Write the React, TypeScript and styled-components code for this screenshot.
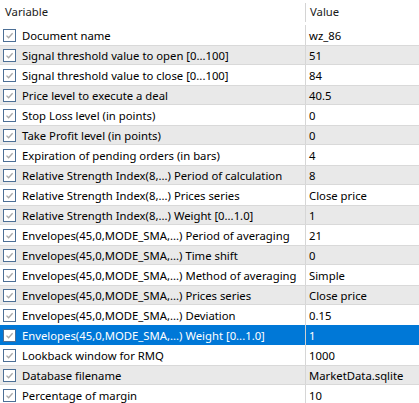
import React from "react";
import styled, { createGlobalStyle, css } from "styled-components";

const GlobalStyle = createGlobalStyle`
  html, body {
    margin: 0;
    padding: 0;
    background: #ffffff;
  }
  body {
    font-family: "Noto Sans", "Open Sans", Arial, sans-serif;
    font-size: 11.3px;
    color: #000000;
    overflow: hidden;
  }
`;

type Param = { name: string; value: string };

const params: Param[] = [
  { name: "Document name", value: "wz_86" },
  { name: "Signal threshold value to open [0...100]", value: "51" },
  { name: "Signal threshold value to close [0...100]", value: "84" },
  { name: "Price level to execute a deal", value: "40.5" },
  { name: "Stop Loss level (in points)", value: "0" },
  { name: "Take Profit level (in points)", value: "0" },
  { name: "Expiration of pending orders (in bars)", value: "4" },
  { name: "Relative Strength Index(8,...) Period of calculation", value: "8" },
  { name: "Relative Strength Index(8,...) Prices series", value: "Close price" },
  { name: "Relative Strength Index(8,...) Weight [0...1.0]", value: "1" },
  { name: "Envelopes(45,0,MODE_SMA,...) Period of averaging", value: "21" },
  { name: "Envelopes(45,0,MODE_SMA,...) Time shift", value: "0" },
  { name: "Envelopes(45,0,MODE_SMA,...) Method of averaging", value: "Simple" },
  { name: "Envelopes(45,0,MODE_SMA,...) Prices series", value: "Close price" },
  { name: "Envelopes(45,0,MODE_SMA,...) Deviation", value: "0.15" },
  { name: "Envelopes(45,0,MODE_SMA,...) Weight [0...1.0]", value: "1" },
  { name: "Lookback window for RMQ", value: "1000" },
  { name: "Database filename", value: "MarketData.sqlite" },
  { name: "Percentage of margin", value: "10" },
];

const SELECTED = 15;

const Table = styled.div`
  width: 419px;
  display: flex;
  flex-direction: column;
`;

const Header = styled.div`
  display: grid;
  grid-template-columns: 305px 1fr;
  height: 25px;
  align-items: stretch;
`;

const HeadCell = styled.div<{ $divider?: boolean }>`
  display: flex;
  align-items: center;
  padding-left: 5px;
  padding-bottom: 2px;
  color: #1a1a1a;
  ${(p) =>
    p.$divider &&
    css`
      position: relative;
      &:before {
        content: "";
        position: absolute;
        left: 0;
        top: 3px;
        height: 19px;
        width: 1px;
        background: #d4d4d4;
      }
    `}
`;

type Tone = "plain" | "shade" | "selected";

const Row = styled.div<{ $tone: Tone }>`
  display: grid;
  grid-template-columns: 305px 1fr;
  height: 20px;
  box-sizing: border-box;
  background: #ffffff;
  ${(p) =>
    p.$tone === "shade" &&
    css`
      background: #e9e9e9;
      border-top: 1px solid #d9d9d9;
      border-bottom: 1px solid #d9d9d9;
    `}
  ${(p) =>
    p.$tone === "selected" &&
    css`
      background: #0078d7;
      color: #ffffff;
    `}
`;

const NameCell = styled.div`
  display: flex;
  align-items: center;
  gap: 6px;
  padding-left: 3px;
  padding-top: 1px;
  white-space: nowrap;
  overflow: hidden;
`;

const ValueCell = styled.div<{ $tone: Tone }>`
  display: flex;
  align-items: center;
  padding-left: 3px;
  padding-top: 1px;
  white-space: nowrap;
  overflow: hidden;
  border-left: 1px solid ${(p) => (p.$tone === "selected" ? "#d0d0d0" : "#d6d6d6")};
`;

const Box = styled.span`
  flex: 0 0 auto;
  width: 13px;
  height: 13px;
  margin-top: -1px;
  box-sizing: border-box;
  border: 1px solid #4c6f96;
  background: #ffffff;
  display: inline-flex;
  align-items: center;
  justify-content: center;
`;

const Check = () => (
  <Box>
    <svg width="9" height="9" viewBox="0 0 9 9">
      <path d="M1.5 4.6 L3.6 6.7 L7.6 2.2" fill="none" stroke="#a8a8a8" strokeWidth="1.3" />
    </svg>
  </Box>
);

export default function App() {
  return (
    <>
      <GlobalStyle />
      <Table>
        <Header>
          <HeadCell>Variable</HeadCell>
          <HeadCell $divider>Value</HeadCell>
        </Header>
        {params.map((p, i) => {
          const tone: Tone = i === SELECTED ? "selected" : i % 2 === 1 ? "shade" : "plain";
          return (
            <Row key={p.name} $tone={tone}>
              <NameCell>
                <Check />
                {p.name}
              </NameCell>
              <ValueCell $tone={tone}>{p.value}</ValueCell>
            </Row>
          );
        })}
      </Table>
    </>
  );
}
